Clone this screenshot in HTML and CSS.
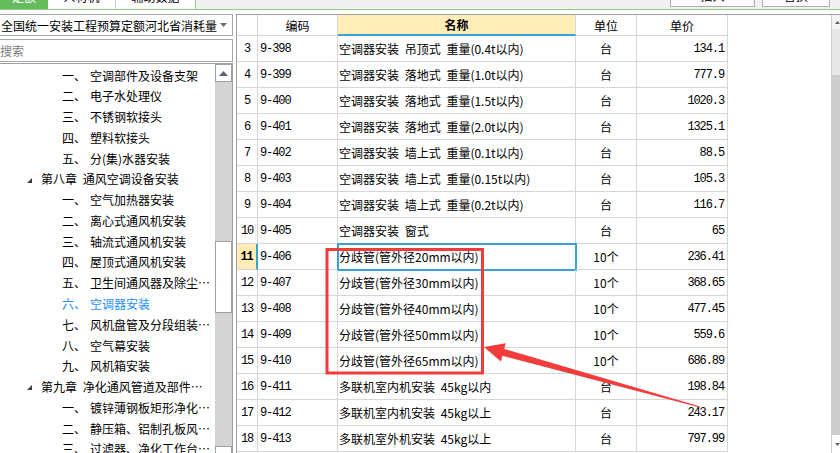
FILE: index.html
```html
<!DOCTYPE html>
<html lang="zh-CN">
<head>
<meta charset="utf-8">
<title>定额查询</title>
<link rel="stylesheet" href="styles.css">
</head>
<body>
<div class="app">
  <div class="topbar">
    <div class="tabs">
      <div class="tab tab-active"><span>定额</span></div>
      <div class="tab tab2"><span>人材机</span></div>
      <div class="tab tab3"><span>辅助数据</span></div>
    </div>
    <div class="actions">
      <div class="btn btn1"><span>插入</span></div>
      <div class="btn btn2"><span>替换</span></div>
    </div>
  </div>

  <div class="main">
    <div class="left">
      <div class="select">
        <span class="select-text">全国统一安装工程预算定额河北省消耗量</span>
        <svg class="caret" width="7" height="4" viewBox="0 0 7 4"><polygon points="0,0 7,0 3.5,4" fill="#6d6d6d"/></svg>
      </div>
      <div class="search">搜索</div>
      <div class="tree">
        <ul class="tree-list">
          <li class="node l2"><span class="num">一、</span>空调部件及设备支架</li>
          <li class="node l2"><span class="num">二、</span>电子水处理仪</li>
          <li class="node l2"><span class="num">三、</span>不锈钢软接头</li>
          <li class="node l2"><span class="num">四、</span>塑料软接头</li>
          <li class="node l2"><span class="num">五、</span>分(集)水器安装</li>
          <li class="node l1"><svg class="tri" width="5" height="5" viewBox="0 0 5 5"><polygon points="5,0 5,5 0,5" fill="#3c3c3c"/></svg>第八章 通风空调设备安装</li>
          <li class="node l2"><span class="num">一、</span>空气加热器安装</li>
          <li class="node l2"><span class="num">二、</span>离心式通风机安装</li>
          <li class="node l2"><span class="num">三、</span>轴流式通风机安装</li>
          <li class="node l2"><span class="num">四、</span>屋顶式通风机安装</li>
          <li class="node l2"><span class="num">五、</span>卫生间通风器及除尘器安装</li>
          <li class="node l2 selected"><span class="num">六、</span>空调器安装</li>
          <li class="node l2"><span class="num">七、</span>风机盘管及分段组装式空调器安装</li>
          <li class="node l2"><span class="num">八、</span>空气幕安装</li>
          <li class="node l2"><span class="num">九、</span>风机箱安装</li>
          <li class="node l1"><svg class="tri" width="5" height="5" viewBox="0 0 5 5"><polygon points="5,0 5,5 0,5" fill="#3c3c3c"/></svg>第九章 净化通风管道及部件制作安装</li>
          <li class="node l2"><span class="num">一、</span>镀锌薄钢板矩形净化通风管道制作安装</li>
          <li class="node l2"><span class="num">二、</span>静压箱、铝制孔板风口、单层百叶风口安装</li>
          <li class="node l2"><span class="num">三、</span>过滤器、净化工作台、风淋室安装</li>
        </ul>
        <div class="tscroll">
          <div class="tbtn"><svg width="9" height="5" viewBox="0 0 9 5"><polygon points="0,5 9,5 4.5,0" fill="#5b6273"/></svg></div>
          <div class="tgap"></div>
          <div class="tthumb"></div>
          <div class="tfill"></div>
          <div class="tbtn"><svg width="9" height="5" viewBox="0 0 9 5"><polygon points="0,0 9,0 4.5,5" fill="#5b6273"/></svg></div>
        </div>
      </div>
    </div>

    <div class="gridpanel">
      <div class="grid">
        <div class="c hd"></div>
        <div class="c hd">编码</div>
        <div class="c hd hd-active">名称</div>
        <div class="c hd">单位</div>
        <div class="c hd">单价</div>

        <div class="c rn">3</div><div class="c code">9-398</div><div class="c name">空调器安装 吊顶式 重量(0.4t以内)</div><div class="c unit">台</div><div class="c price">134.1</div>
        <div class="c rn">4</div><div class="c code">9-399</div><div class="c name">空调器安装 落地式 重量(1.0t以内)</div><div class="c unit">台</div><div class="c price">777.9</div>
        <div class="c rn">5</div><div class="c code">9-400</div><div class="c name">空调器安装 落地式 重量(1.5t以内)</div><div class="c unit">台</div><div class="c price">1020.3</div>
        <div class="c rn">6</div><div class="c code">9-401</div><div class="c name">空调器安装 落地式 重量(2.0t以内)</div><div class="c unit">台</div><div class="c price">1325.1</div>
        <div class="c rn">7</div><div class="c code">9-402</div><div class="c name">空调器安装 墙上式 重量(0.1t以内)</div><div class="c unit">台</div><div class="c price">88.5</div>
        <div class="c rn">8</div><div class="c code">9-403</div><div class="c name">空调器安装 墙上式 重量(0.15t以内)</div><div class="c unit">台</div><div class="c price">105.3</div>
        <div class="c rn">9</div><div class="c code">9-404</div><div class="c name">空调器安装 墙上式 重量(0.2t以内)</div><div class="c unit">台</div><div class="c price">116.7</div>
        <div class="c rn">10</div><div class="c code">9-405</div><div class="c name">空调器安装 窗式</div><div class="c unit">台</div><div class="c price">65</div>
        <div class="c rn rn-active">11</div><div class="c code">9-406</div><div class="c name name-active">分歧管(管外径20mm以内)</div><div class="c unit">10个</div><div class="c price">236.41</div>
        <div class="c rn">12</div><div class="c code">9-407</div><div class="c name">分歧管(管外径30mm以内)</div><div class="c unit">10个</div><div class="c price">368.65</div>
        <div class="c rn">13</div><div class="c code">9-408</div><div class="c name">分歧管(管外径40mm以内)</div><div class="c unit">10个</div><div class="c price">477.45</div>
        <div class="c rn">14</div><div class="c code">9-409</div><div class="c name">分歧管(管外径50mm以内)</div><div class="c unit">10个</div><div class="c price">559.6</div>
        <div class="c rn">15</div><div class="c code">9-410</div><div class="c name">分歧管(管外径65mm以内)</div><div class="c unit">10个</div><div class="c price">686.89</div>
        <div class="c rn">16</div><div class="c code">9-411</div><div class="c name">多联机室内机安装 45kg以内</div><div class="c unit">台</div><div class="c price">198.84</div>
        <div class="c rn">17</div><div class="c code">9-412</div><div class="c name">多联机室内机安装 45kg以上</div><div class="c unit">台</div><div class="c price">243.17</div>
        <div class="c rn">18</div><div class="c code">9-413</div><div class="c name">多联机室外机安装 45kg以上</div><div class="c unit">台</div><div class="c price">797.99</div>
      </div>
      <div class="blank"></div>
      <div class="vscroll">
        <div class="vbtn vbtn-up"><svg width="9" height="5" viewBox="0 0 9 5"><polygon points="0,5 9,5 4.5,0" fill="#606060"/></svg></div>
        <div class="vtrack"></div>
        <div class="vthumb"></div>
        <div class="vbtn vbtn-down"><svg width="9" height="5" viewBox="0 0 9 5"><polygon points="0,0 9,0 4.5,5" fill="#606060"/></svg></div>
      </div>
    </div>
  </div>

  <svg class="annot" width="840" height="453" viewBox="0 0 840 453">
    <rect x="327" y="249.5" width="155.5" height="123.5" fill="none" stroke="#f23b3b" stroke-width="3"/>
    <polygon points="484,347 505.7,343.2 504.2,349 700.1,406.4 699.9,407.6 502.4,355.8 500.9,361.6" fill="#f23b3b"/>
  </svg>
</div>
</body>
</html>
```

FILE: styles.css
```css
* {
  box-sizing: border-box;
  margin: 0;
  padding: 0;
}

html,
body {
  width: 840px;
  height: 453px;
  overflow: hidden;
  background: #ffffff;
}

body {
  font-family: "Noto Sans CJK SC", "Noto Sans", sans-serif;
  font-size: 12px;
  color: #000000;
}

.app {
  position: relative;
  width: 840px;
  height: 453px;
  overflow: hidden;
}

/* ---------- top bar ---------- */
.topbar {
  height: 10px;
  background: #f0f0f0;
  border-bottom: 1px solid #8fd083;
  display: flex;
}

.tabs {
  display: flex;
  height: 9px;
}

.tab {
  height: 9px;
  overflow: hidden;
  text-align: center;
  background: #ffffff;
  border-right: 1px solid #cdcdcd;
}

.tab span {
  display: block;
  line-height: 14px;
  margin-top: -10px;
}

.tab-active {
  width: 48px;
  background: #64bc5d;
  color: #ffffff;
  border-right: none;
}

.tab2 {
  width: 68px;
}

.tab3 {
  width: 80px;
  border-right-color: #8fd083;
}

.actions {
  margin-left: auto;
  margin-right: 10px;
  display: flex;
  gap: 7px;
}

.btn {
  height: 7px;
  overflow: hidden;
  text-align: center;
  background: #fafafa;
  border: 1px solid #adadad;
  border-top: none;
}

.btn span {
  display: block;
  line-height: 14px;
  margin-top: -11px;
}

.btn1 {
  width: 85px;
}

.btn2 {
  width: 68px;
}

/* ---------- main ---------- */
.main {
  height: 443px;
  padding-top: 4px;
  display: flex;
  align-items: flex-start;
}

.left {
  width: 234px;
  margin-left: -1px;
  display: flex;
  flex-direction: column;
  flex: none;
}

.select {
  height: 22px;
  border: 1px solid #a9a9a9;
  display: flex;
  align-items: center;
  padding-left: 1px;
  white-space: nowrap;
}

.caret {
  margin-left: auto;
  margin-right: 5px;
}

.search {
  margin-top: 3px;
  height: 23px;
  border: 1px solid #a9a9a9;
  color: #7b7b7b;
  line-height: 21px;
}

.tree {
  margin-top: 1px;
  height: 402px;
  border: 1px solid #a0a0a0;
  display: flex;
}

.tree-list {
  width: 215px;
  flex: none;
  list-style: none;
  padding-top: 1.6px;
  overflow: hidden;
}

.node {
  height: 20.78px;
  line-height: 20.78px;
  white-space: nowrap;
  overflow: hidden;
  text-overflow: ellipsis;
  padding-right: 3px;
  word-spacing: 3px;
}

.l2 {
  padding-left: 62px;
}

.l1 {
  padding-left: 27px;
}

.num {
  display: inline-block;
  width: 28px;
}

.tri {
  display: inline-block;
  margin-right: 9px;
  vertical-align: middle;
  position: relative;
  top: -1px;
}

.selected {
  color: #1e8ef5;
}

.tscroll {
  width: 17px;
  flex: none;
  background: #d4d4d4;
  display: flex;
  flex-direction: column;
}

.tbtn {
  height: 18px;
  flex: none;
  background: #ffffff;
  border: 1px solid #a0a0a0;
  display: flex;
  align-items: center;
  justify-content: center;
}

.tgap {
  height: 159px;
  flex: none;
}

.tthumb {
  height: 72px;
  flex: none;
  background: #ffffff;
  border: 1px solid #a0a0a0;
}

.tfill {
  flex: 1;
}

/* ---------- grid ---------- */
.gridpanel {
  flex: 1;
  height: 439px;
  margin-left: 3px;
  border-top: 1px solid #a0a0a0;
  border-left: 1px solid #a0a0a0;
  display: flex;
}

.grid {
  width: 491px;
  flex: none;
  display: grid;
  grid-template-columns: 21px 80px 238px 61px 91px;
  grid-template-rows: 21px;
  grid-auto-rows: 26px;
  align-content: start;
}

.c {
  border-right: 1px solid #d6d6d6;
  border-bottom: 1px solid #d6d6d6;
  display: flex;
  align-items: center;
  overflow: hidden;
  white-space: nowrap;
}

.hd {
  justify-content: center;
}

.hd-active {
  background: #ffeeb7;
  font-weight: bold;
  border-bottom: 2px solid #38a2d3;
}

.rn,
.code,
.price {
  font-family: "Liberation Mono", "DejaVu Sans Mono", monospace;
  letter-spacing: -1.1px;
}

.rn {
  justify-content: center;
}

.rn-active {
  background: #ffebb3;
  font-weight: bold;
  border-right: 2px solid #38a2d3;
}

.code {
  padding-left: 2px;
}

.name {
  padding-left: 1px;
  word-spacing: 3px;
}

.name-active {
  outline: 2px solid #38a2d3;
  outline-offset: -1px;
}

.unit {
  justify-content: center;
}

.price {
  justify-content: flex-end;
  padding-right: 3px;
}

.blank {
  flex: 1;
}

.vscroll {
  width: 9px;
  flex: none;
  border-left: 1px solid #d0d0d0;
  display: flex;
  flex-direction: column;
}

.vbtn {
  flex: none;
  background: #f4f4f4;
  display: flex;
  align-items: center;
  justify-content: flex-start;
  padding-left: 3px;
  overflow: hidden;
}

.vbtn-up {
  height: 14px;
}

.vbtn-down {
  height: 19px;
  background: #ffffff;
  border-top: 1px solid #d0d0d0;
}

.vtrack {
  height: 46px;
  flex: none;
  background: #e7e7e7;
}

.vthumb {
  flex: 1;
  background: #cdcdcd;
}

/* ---------- annotation overlay ---------- */
.annot {
  position: absolute;
  top: 0;
  left: 0;
  pointer-events: none;
}
```
